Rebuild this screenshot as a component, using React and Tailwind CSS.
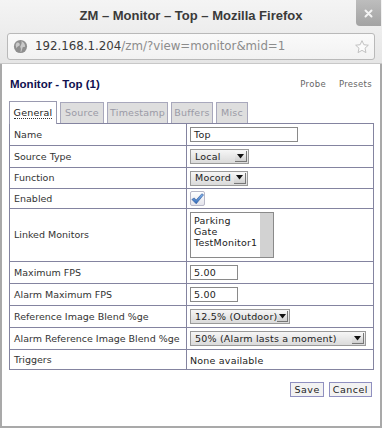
import React from "react";

const dv = { fontFamily: '"DejaVu Sans", sans-serif' };

function Select({ label, width }) {
  return (
    <div
      className="flex h-[15px] items-stretch whitespace-nowrap border border-[#9a9a9a] bg-gradient-to-b from-[#f6f6f6] to-[#dadada] text-[9.5px] text-[#222]"
      style={{ width }}
    >
      <div className="flex flex-1 items-center pl-[4px] leading-none tracking-[0.2px]">{label}</div>
      <div className="my-[1px] mr-[1px] flex w-[12px] items-center justify-center border-b border-r border-[#777] bg-gradient-to-b from-[#fafafa] to-[#cfcfcf]">
        <svg width="7" height="5" viewBox="0 0 7 5">
          <path d="M0 0 H7 L3.5 4.5 Z" fill="#111" />
        </svg>
      </div>
    </div>
  );
}

function TextInput({ value, width }) {
  return (
    <div
      className="flex h-[15px] items-center border border-[#8a8a8a] bg-white pl-[3px] text-[9.5px] leading-none tracking-[0.2px] text-[#222]"
      style={{ width }}
    >
      {value}
    </div>
  );
}

const rows = [
  { label: "Name", h: 22, cell: <TextInput value="Top" width={108} /> },
  { label: "Source Type", h: 22, cell: <Select label="Local" width={59} /> },
  { label: "Function", h: 21, cell: <Select label="Mocord" width={58} /> },
  {
    label: "Enabled",
    h: 20,
    cell: (
      <div className="flex h-[15px] w-[15px] items-center justify-center rounded-[2px] border border-[#b8b8c8] bg-gradient-to-b from-[#ffffff] to-[#e4e4ec]">
        <svg width="15" height="14" viewBox="0 0 15 14">
          <defs>
            <linearGradient id="ck" x1="0" y1="0" x2="0" y2="1">
              <stop offset="0" stopColor="#8ab8ee" />
              <stop offset="1" stopColor="#2f68b8" />
            </linearGradient>
          </defs>
          <path d="M1 7.5 L3.8 5.8 L5.8 8.3 L12.5 1 L14.5 2.2 L6 12.5 Z" fill="url(#ck)" stroke="#2a5596" strokeWidth="0.7" strokeLinejoin="round" />
        </svg>
      </div>
    ),
  },
  {
    label: "Linked Monitors",
    h: 53,
    cell: (
      <div className="flex h-[46px] w-[84px] border border-[#8a8a8a] bg-white">
        <div className="flex flex-1 flex-col pl-[3px] pt-[2px] text-[9.5px] leading-[11px] tracking-[0.2px] text-[#222]">
          <span>Parking</span>
          <span>Gate</span>
          <span>TestMonitor1</span>
        </div>
        <div className="w-[13px] bg-[#d2d2d2]" />
      </div>
    ),
  },
  { label: "Maximum FPS", h: 22, cell: <TextInput value="5.00" width={48} /> },
  { label: "Alarm Maximum FPS", h: 22, cell: <TextInput value="5.00" width={48} /> },
  { label: "Reference Image Blend %ge", h: 22, cell: <Select label="12.5% (Outdoor)" width={100} /> },
  { label: "Alarm Reference Image Blend %ge", h: 22, cell: <Select label="50% (Alarm lasts a moment)" width={176} /> },
  {
    label: "Triggers",
    h: 20,
    cell: <span className="text-[9.5px] tracking-[0.2px] text-[#222]">None available</span>,
  },
];

const tabs = [
  { name: "General", w: 48, active: true },
  { name: "Source", w: 44 },
  { name: "Timestamp", w: 61 },
  { name: "Buffers", w: 42 },
  { name: "Misc", w: 32 },
];

export default function App() {
  return (
    <div className="flex h-[428px] w-[382px] flex-col overflow-hidden bg-white" style={dv}>
      {/* chrome */}
      <div className="relative flex h-[64px] flex-col bg-gradient-to-b from-[#f4f4f4] to-[#e6e6e6] border-b border-[#c8c8c8]">
        <div
          className="flex h-[31px] items-center justify-center text-[13px] font-bold text-[#3a3a3a]"
          style={{ fontFamily: '"Liberation Sans", Arial, sans-serif' }}
        >
          ZM – Monitor – Top – Mozilla Firefox
        </div>
        <div className="absolute right-[1px] top-0 flex h-[26px] w-[25px] items-center justify-center rounded-bl-[4px] bg-gradient-to-b from-[#bdbdbd] to-[#a3a3a3]">
          <svg width="9" height="9" viewBox="0 0 9 9">
            <path d="M1.5 1.5 L7.5 7.5 M7.5 1.5 L1.5 7.5" stroke="#f4f4f4" strokeWidth="2" strokeLinecap="round" />
          </svg>
        </div>
        <div className="mx-[7px] mt-[2px] flex h-[27px] items-center rounded-[3px] border border-[#b9b9b9] bg-gradient-to-b from-[#fafafa] to-[#f2f2f2] pl-[5px] pr-[4px]">
          <svg width="15" height="15" viewBox="0 0 16 16">
            <circle cx="8" cy="8" r="7" fill="#8f8f8f" />
            <path d="M4 4 C6 3 8 5 7 7 C6 8 4 8 4 10 C3 8 2 6 4 4 Z M9 2 C11 3 13 5 13 8 C12 9 10 8 10 10 C9 12 10 13 8 14 C8 12 9 11 8 9 C7 7 10 6 9 2 Z" fill="#c9c9c9" />
          </svg>
          <div className="ml-[7px] flex-1 whitespace-nowrap text-[11.8px]">
            <span className="text-[#3a3a3a]">192.168.1.204</span>
            <span className="text-[#8c8c8c]">/zm/?view=monitor&amp;mid=1</span>
          </div>
          <svg width="16" height="16" viewBox="0 0 24 24">
            <path
              d="M12 2.5 L14.8 8.6 L21.5 9.3 L16.5 13.8 L17.9 20.4 L12 17 L6.1 20.4 L7.5 13.8 L2.5 9.3 L9.2 8.6 Z"
              fill="#fbfbfb"
              stroke="#b8b8b8"
              strokeWidth="1.3"
              strokeLinejoin="round"
            />
          </svg>
        </div>
      </div>

      {/* page */}
      <div className="flex flex-1 flex-col border-x-2 border-b-2 border-[#a9a9a9] pl-[7px] pr-[7px]">
        <div className="flex items-center justify-between pt-[12px] leading-[16px]">
          <span
            className="pl-[1px] text-[11.5px] font-bold text-[#10104f]"
            style={{ fontFamily: '"Liberation Sans", Arial, sans-serif' }}
          >
            Monitor - Top (1)
          </span>
          <div className="flex gap-[13px] pr-[1px] text-[8.5px] tracking-[0.3px] text-[#666]">
            <span>Probe</span>
            <span>Presets</span>
          </div>
        </div>

        <div className="mt-[9px] flex items-end gap-[3px]">
          {tabs.map((t) =>
            t.active ? (
              <div
                key={t.name}
                className="relative z-10 -mb-px flex h-[23px] items-center justify-center border border-b-0 border-[#9a9ab0] bg-white text-[9.5px] tracking-[0.2px] text-[#222]"
                style={{ width: t.w }}
              >
                <span className="border-b border-dotted border-[#333] leading-[11px]">{t.name}</span>
              </div>
            ) : (
              <div
                key={t.name}
                className="flex h-[21px] items-center justify-center border border-b-0 border-[#a8a8bc] bg-[#dedede] text-[9.5px] tracking-[0.2px] text-[#9a9aa6]"
                style={{ width: t.w }}
              >
                {t.name}
              </div>
            )
          )}
        </div>

        <table className="w-[365px] table-fixed border-collapse border border-[#8484a0]">
          <colgroup>
            <col className="w-[177px]" />
            <col />
          </colgroup>
          <tbody>
            {rows.map((r) => (
              <tr key={r.label} style={{ height: r.h }}>
                <td className="overflow-hidden whitespace-nowrap border border-[#8484a0] p-0 pl-[4px] text-[9.5px] leading-[12px] text-[#333]">
                  {r.label}
                </td>
                <td className="border border-[#8484a0] p-0 pl-[3px] align-middle leading-[12px]">{r.cell}</td>
              </tr>
            ))}
          </tbody>
        </table>

        <div className="mt-[12px] flex justify-end gap-[5px] pr-[1px]">
          <button className="h-[15px] border border-[#9090c0] bg-[#f2f2f2] px-[3px] text-[9.5px] leading-none tracking-[0.5px] text-[#222]">
            Save
          </button>
          <button className="h-[15px] border border-[#9090c0] bg-[#f2f2f2] px-[3px] text-[9.5px] leading-none tracking-[0.5px] text-[#222]">
            Cancel
          </button>
        </div>
      </div>
    </div>
  );
}
